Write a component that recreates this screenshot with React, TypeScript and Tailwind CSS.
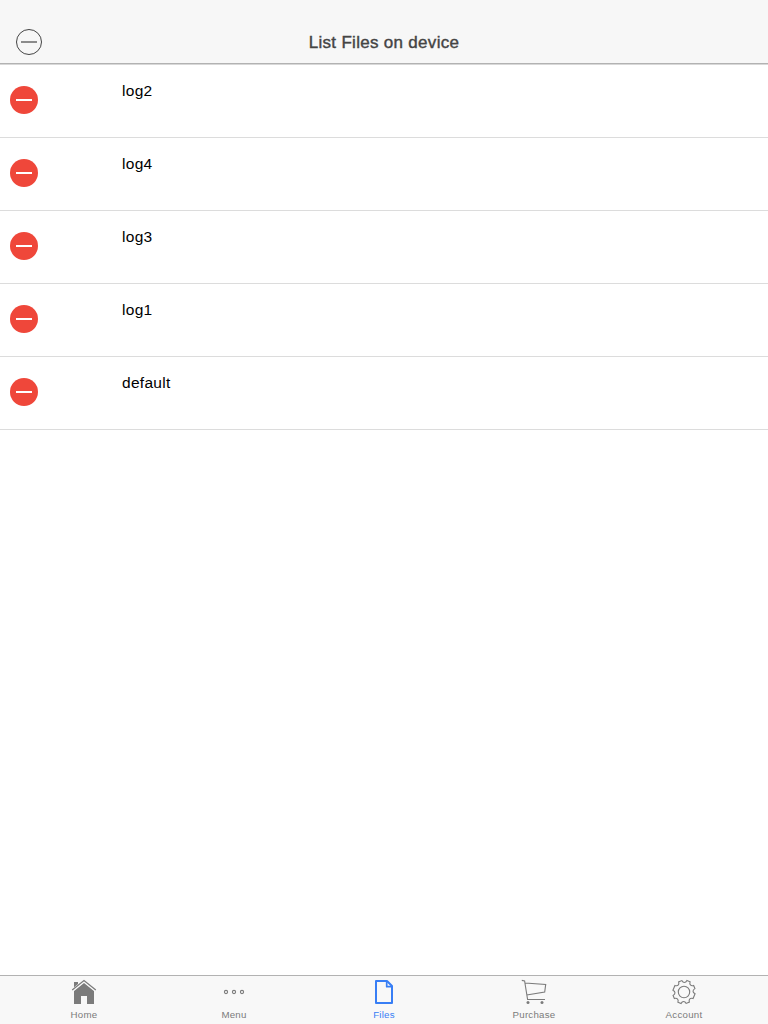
import type { ReactNode } from "react";

const files = ["log2", "log4", "log3", "log1", "default"];

const tabs: { label: string; active?: boolean; icon: ReactNode }[] = [
  {
    label: "Home",
    icon: (
      <g fill="#7b7b7b">
        <path d="M3 13 13 5l10 8v13h-7v-8h-6v8H3z" />
        <path d="M3 10.8V4h4v3.4z" />
        <path d="M1.2 12.6 13 2.8l11.8 9.8" fill="none" stroke="#f8f8f8" strokeWidth="2.6" />
        <path d="M1.2 12 13 2.6 24.8 12" fill="none" stroke="#7b7b7b" strokeWidth="1.3" />
      </g>
    ),
  },
  {
    label: "Menu",
    icon: (
      <g fill="none" stroke="#7b7b7b" strokeWidth="1.1">
        <circle cx="5" cy="14" r="1.6" />
        <circle cx="13" cy="14" r="1.6" />
        <circle cx="21" cy="14" r="1.6" />
      </g>
    ),
  },
  {
    label: "Files",
    active: true,
    icon: (
      <g fill="none" stroke="#387ef5" strokeWidth="2" strokeLinejoin="round">
        <path d="M5 3h11l5 5v17H5z" />
        <path d="M15.7 3v5.7H21" strokeWidth="1.7" />
      </g>
    ),
  },
  {
    label: "Purchase",
    icon: (
      <g fill="none" stroke="#7b7b7b" strokeWidth="1.1">
        <path d="M0.8 2.4 3.6 3l3 18.5H24M4 5l20.7 1.4-1 7.6-18 3" />
        <circle cx="7" cy="24.5" r="1.5" fill="#7b7b7b" stroke="none" />
        <circle cx="21" cy="24.5" r="1.5" fill="#7b7b7b" stroke="none" />
      </g>
    ),
  },
  {
    label: "Account",
    icon: (
      <g fill="none" stroke="#7b7b7b" strokeWidth="1.1">
        <path
          transform="rotate(22.5 13 14)"
          d="M11.3 2.2h3.4c.2 3 2.4 3.9 4.7 2.1l2.4 2.4c-1.8 2.3-.9 4.5 2.1 4.7v5.2c-3 .2-3.9 2.4-2.1 4.7l-2.4 2.4c-2.3-1.8-4.5-.9-4.7 2.1h-3.4c-.2-3-2.4-3.9-4.7-2.1l-2.4-2.4c1.8-2.3.9-4.5-2.1-4.7v-5.2c3-.2 3.9-2.4 2.1-4.7l2.4-2.4c2.3 1.8 4.5.9 4.7-2.1z"
        />
        <circle cx="13" cy="14" r="5.7" />
      </g>
    ),
  },
];

export default function App() {
  return (
    <div className="flex h-screen w-full flex-col overflow-hidden bg-white font-['Liberation_Sans',sans-serif]">
      <header className="grid h-[65px] shrink-0 grid-cols-[1fr_auto_1fr] items-center border-b border-[#d8d8d8] bg-[#f7f7f7] pt-5 shadow-[inset_0_-1px_0_#b2b2b2]">
        <button aria-label="Edit" className="ml-[15px] w-7">
          <svg className="block size-7" viewBox="0 0 28 28" fill="none" stroke="#444">
            <circle cx="14" cy="14" r="12.5" />
            <path d="M6 14h16" strokeWidth="1.2" />
          </svg>
        </button>
        <h1 className="pt-[2px] text-[17px] leading-5 tracking-[0.3px] text-[#444] [-webkit-text-stroke:0.4px_#444]">
          List Files on device
        </h1>
        <span />
      </header>
      <ul className="flex-1">
        {files.map((name) => (
          <li key={name} className="flex h-[73px] border-b border-[#dcdcdc] pl-[10px] pt-[15px]">
            <button aria-label={`Delete ${name}`} className="mt-[6px] h-7 w-[112px]">
              <svg className="block size-7" viewBox="0 0 28 28">
                <circle cx="14" cy="14" r="14" fill="#ef473a" />
                <path d="M6 14h16" stroke="#fff" strokeWidth="2" />
              </svg>
            </button>
            <span className="text-[15.5px] leading-[22px] tracking-[0.3px] text-black">{name}</span>
          </li>
        ))}
      </ul>
      <nav className="grid h-[49px] shrink-0 grid-cols-5 border-t border-[#b2b2b2] bg-[#f8f8f8] px-[9px]">
        {tabs.map((tab) => (
          <button
            key={tab.label}
            className={`flex flex-col items-center pt-[2px] ${tab.active ? "text-[#387ef5]" : "text-[#7b7b7b]"}`}
          >
            <svg className="h-7 w-[26px] shrink-0" viewBox="0 0 26 28">
              {tab.icon}
            </svg>
            <span className="mt-[2px] text-[9.7px] leading-[14px] tracking-[0.25px]">{tab.label}</span>
          </button>
        ))}
      </nav>
    </div>
  );
}
